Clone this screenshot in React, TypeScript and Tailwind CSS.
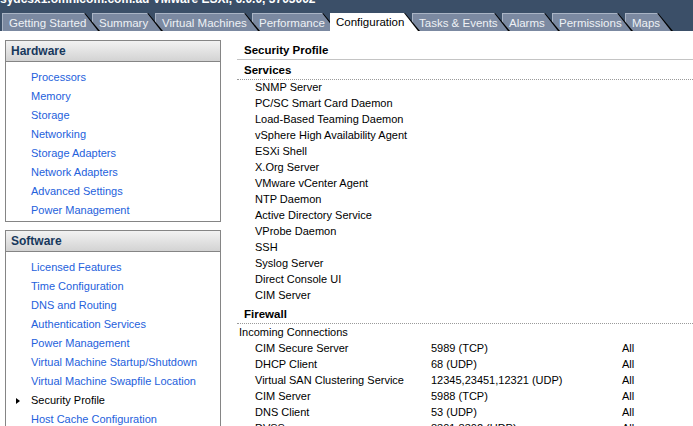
import React from "react";

const tabs = [
  { label: "Getting Started", w: 98 },
  { label: "Summary", w: 71 },
  { label: "Virtual Machines", w: 105 },
  { label: "Performance", w: 86 },
  { label: "Configuration", w: 90, active: true },
  { label: "Tasks & Events", w: 98 },
  { label: "Alarms", w: 58 },
  { label: "Permissions", w: 81 },
  { label: "Maps", w: 48 },
];

const hardware = [
  "Processors",
  "Memory",
  "Storage",
  "Networking",
  "Storage Adapters",
  "Network Adapters",
  "Advanced Settings",
  "Power Management",
];

const software = [
  "Licensed Features",
  "Time Configuration",
  "DNS and Routing",
  "Authentication Services",
  "Power Management",
  "Virtual Machine Startup/Shutdown",
  "Virtual Machine Swapfile Location",
  "Security Profile",
  "Host Cache Configuration",
  "System Resource Reservation",
];

const services = [
  "SNMP Server",
  "PC/SC Smart Card Daemon",
  "Load-Based Teaming Daemon",
  "vSphere High Availability Agent",
  "ESXi Shell",
  "X.Org Server",
  "VMware vCenter Agent",
  "NTP Daemon",
  "Active Directory Service",
  "VProbe Daemon",
  "SSH",
  "Syslog Server",
  "Direct Console UI",
  "CIM Server",
];

const firewall = [
  ["CIM Secure Server", "5989 (TCP)", "All"],
  ["DHCP Client", "68 (UDP)", "All"],
  ["Virtual SAN Clustering Service", "12345,23451,12321 (UDP)", "All"],
  ["CIM Server", "5988 (TCP)", "All"],
  ["DNS Client", "53 (UDP)", "All"],
  ["DVSSync", "8301,8302 (UDP)", "All"],
];

function Tab({ label, w, active, z }: { label: string; w: number; active?: boolean; z: number }) {
  return (
    <div
      className="relative h-[18px] shrink-0 -mr-[8px] bg-black [clip-path:polygon(0_0,calc(100%_-_15px)_0,100%_100%,0_100%)]"
      style={{ width: w, zIndex: z }}
    >
      <div
        className={
          "h-[18px] pl-[6px] pt-[1px] text-[11.5px] leading-[16px] whitespace-nowrap [clip-path:polygon(0_0,calc(100%_-_16px)_0,calc(100%_-_2px)_100%,0_100%)] " +
          (active
            ? "bg-white text-black"
            : "bg-[#7b89a1] text-[#eef1f5] border-t border-l border-[#a9b4c5]")
        }
      >
        {label}
      </div>
    </div>
  );
}

function Box({ title, items, active }: { title: string; items: string[]; active?: string }) {
  return (
    <div className="border border-[#858585] bg-white">
      <div className="h-[21px] border-b border-[#858585] bg-gradient-to-b from-[#f2f2f2] to-[#d3d3d3] pl-[5px] text-[12px] font-bold leading-[21px] text-[#17385c]">
        {title}
      </div>
      <div className="pt-[6px] pb-[1px]">
        {items.map((it) => (
          <div key={it + title} className="relative flex h-[19px] items-center pl-[25px] leading-[19px]">
            {it === active ? (
              <>
                <svg className="absolute left-[10px] top-[7px]" width="4" height="6" viewBox="0 0 4 6">
                  <path d="M0 0 L4 3 L0 6 Z" fill="#000" />
                </svg>
                <span className="text-black">{it}</span>
              </>
            ) : (
              <span className="text-[#2461dc]">{it}</span>
            )}
          </div>
        ))}
      </div>
    </div>
  );
}

export default function App() {
  return (
    <div className="h-[426px] w-[693px] overflow-hidden bg-white font-['Liberation_Sans',Arial,sans-serif] text-[11px] text-black">
      <div className="flex h-[31px] flex-col bg-[#3b4f68]">
        <div className="h-[13px] overflow-hidden">
          <div className="-mt-[8px] whitespace-nowrap text-[12px] font-bold leading-[14px] text-white">
            sydcsx1.omnicom.com.au VMware ESXi, 6.0.0, 3703002
          </div>
        </div>
        <div className="flex h-[18px] pl-[2px]">
          {tabs.map((t, i) => (
            <Tab key={t.label} label={t.label} w={t.w} active={t.active} z={t.active ? 50 : 20 - i} />
          ))}
        </div>
      </div>

      <div className="flex">
        <div className="w-[221px] shrink-0 pl-[5px] pt-[9px]">
          <Box title="Hardware" items={hardware} />
          <div className="h-[8px]" />
          <Box title="Software" items={software} active="Security Profile" />
        </div>

        <div className="ml-[16px] flex-1 pt-[11px]">
          <div className="h-[16px] pl-[7px] text-[11.5px] font-bold leading-[16px]">Security Profile</div>
          <div className="mt-[1px] h-[1px] bg-[#c4c4c4]" />
          <div className="mt-[2px] h-[16px] pl-[7px] text-[11.5px] font-bold leading-[16px]">Services</div>
          <div className="mt-[1px] border-b border-dotted border-[#9a9a9a]" />
          <div>
            {services.map((s) => (
              <div key={s} className="h-[16px] pl-[18px] leading-[15px]">
                {s}
              </div>
            ))}
          </div>
          <div className="mt-[2px] h-[16px] pl-[7px] text-[11.5px] font-bold leading-[16px]">Firewall</div>
          <div className="mt-[1px] border-b border-dotted border-[#9a9a9a]" />
          <div className="h-[16px] pl-[2px] leading-[16px]">Incoming Connections</div>
          {firewall.map((r) => (
            <div key={r[0] + r[1]} className="flex h-[16px] pl-[18px] leading-[16px] whitespace-nowrap">
              <div className="w-[176px] shrink-0">{r[0]}</div>
              <div className="w-[191px] shrink-0">{r[1]}</div>
              <div>{r[2]}</div>
            </div>
          ))}
        </div>
      </div>
    </div>
  );
}
